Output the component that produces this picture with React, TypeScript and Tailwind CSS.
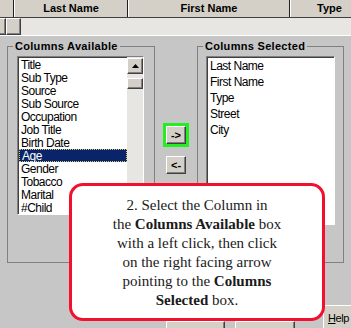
import React from 'react';

const available = [
  'Title',
  'Sub Type',
  'Source',
  'Sub Source',
  'Occupation',
  'Job Title',
  'Birth Date',
  'Age',
  'Gender',
  'Tobacco',
  'Marital',
  '#Child',
];

const selected = ['Last Name', 'First Name', 'Type', 'Street', 'City'];

const raised =
  'bg-[#d4d0c8] border border-white border-r-[#404040] border-b-[#404040] shadow-[inset_-1px_-1px_0_#808080]';
const sunken =
  'bg-white border border-[#808080] border-r-white border-b-white shadow-[inset_1px_1px_0_#404040]';

const HeaderCell: React.FC<{ label?: string; className: string }> = ({ label, className }) => (
  <div
    className={`h-full flex items-center justify-center shrink-0 border-l border-white border-r border-r-[#202020] font-bold text-[11px] text-black ${className}`}
  >
    {label}
  </div>
);

const ListBox: React.FC<{
  items: string[];
  active?: string;
  rowH: string;
  scroll?: boolean;
  className: string;
}> = ({ items, active, rowH, scroll, className }) => (
  <div className={`${sunken} flex overflow-hidden ${className}`}>
    <div className="flex-1 pt-[1px] pl-[1px]">
      {items.map((item) => (
        <div
          key={item}
          className={`${rowH} pl-[2px] flex items-center whitespace-nowrap text-[12px] tracking-[-0.5px] ${
            item === active
              ? 'bg-[#0a246a] text-white border border-dotted border-[#d8c870] pl-[1px]'
              : 'text-black'
          }`}
        >
          {item}
        </div>
      ))}
    </div>
    {scroll && (
      <div className="w-[16px] shrink-0 bg-[#e8e6e2] pt-[1px] flex flex-col">
        <div className={`${raised} w-[16px] h-[16px] flex items-center justify-center`}>
          <svg width="7" height="4" viewBox="0 0 7 4">
            <path d="M3.5 0 L7 4 L0 4 Z" fill="black" />
          </svg>
        </div>
        <div className={`${raised} w-[16px] h-[11px] mt-[4px]`} />
      </div>
    )}
  </div>
);

export default function App() {
  return (
    <div className="w-[351px] h-[328px] overflow-hidden relative bg-[#c6c6c6] font-['Liberation_Sans',Arial,sans-serif] text-[11px]">
      {/* grid header */}
      <div className="h-[18px] flex bg-[#d4d0c8] border-b border-[#404040] overflow-hidden">
        <HeaderCell className="w-[14px] border-l-0" />
        <HeaderCell label="Last Name" className="w-[114px]" />
        <HeaderCell label="First Name" className="w-[162px]" />
        <HeaderCell label="Type" className="w-[80px] justify-start pl-[26px]" />
      </div>

      {/* horizontal scrollbar */}
      <div className="h-[18px] flex items-start bg-[#e8e6e2] border-b border-white">
        <div className={`${raised} w-[6px] h-[17px] border-l-0`} />
        <div className={`${raised} w-[15px] h-[17px]`} />
      </div>

      {/* columns chooser */}
      <div className="flex pl-[7px] pt-[4px]">
        <fieldset className="w-[148px] h-[223px] border border-[#808080] px-[9px]">
          <legend className="-ml-[4px] px-[2px] font-bold text-[11px] tracking-[0.3px] leading-[13px] text-black">
            Columns Available
          </legend>
          <ListBox
            items={available}
            active="Age"
            rowH="h-[13px]"
            scroll
            className="w-[127px] h-[159px] mt-[3px]"
          />
        </fieldset>

        <div className="w-[42px] flex flex-col items-center pt-[83px]">
          <div className="p-[3px] bg-[#22ee22]">
            <button className={`${raised} w-[20px] h-[18px] flex items-center justify-center text-[11px] font-bold text-black`}>
              -&gt;
            </button>
          </div>
          <button className={`${raised} mt-[9px] w-[20px] h-[18px] flex items-center justify-center text-[11px] font-bold text-black`}>
            &lt;-
          </button>
        </div>

        <fieldset className="w-[146px] h-[223px] border border-[#808080] px-[8px]">
          <legend className="-ml-[3px] px-[2px] font-bold text-[11px] tracking-[0.3px] leading-[13px] text-black">
            Columns Selected
          </legend>
          <ListBox items={selected} rowH="h-[16px]" className="w-[129px] h-[169px] mt-[3px]" />
        </fieldset>
      </div>

      {/* bottom buttons */}
      <div className="flex pl-[166px]">
        <button className={`${raised} mt-[58px] w-[59px] h-[23px]`} />
        <button className={`${raised} mt-[58px] ml-[10px] w-[60px] h-[23px]`} />
        <div className="ml-auto mt-[42px] w-[28px] h-[23px] bg-[#d4d0c8] border-t border-l border-white pl-[4px] pt-[4px] text-[11px] tracking-[-0.4px] whitespace-nowrap text-black">
          <span className="underline">H</span>elp
        </div>
      </div>

      {/* callout */}
      <div className="absolute left-[69px] top-[183px] w-[256px] h-[138px] bg-white border-[3px] border-[#f2102e] rounded-[14px] pt-[10px] text-center font-['Liberation_Serif','Times_New_Roman',serif] text-[15px] leading-[19px] text-[#1a1a1a]">
        2. Select the Column in
        <br />
        the <b>Columns Available</b> box
        <br />
        with a left click, then click
        <br />
        on the right facing arrow
        <br />
        pointing to the <b>Columns</b>
        <br />
        <b>Selected</b> box.
      </div>
    </div>
  );
}
